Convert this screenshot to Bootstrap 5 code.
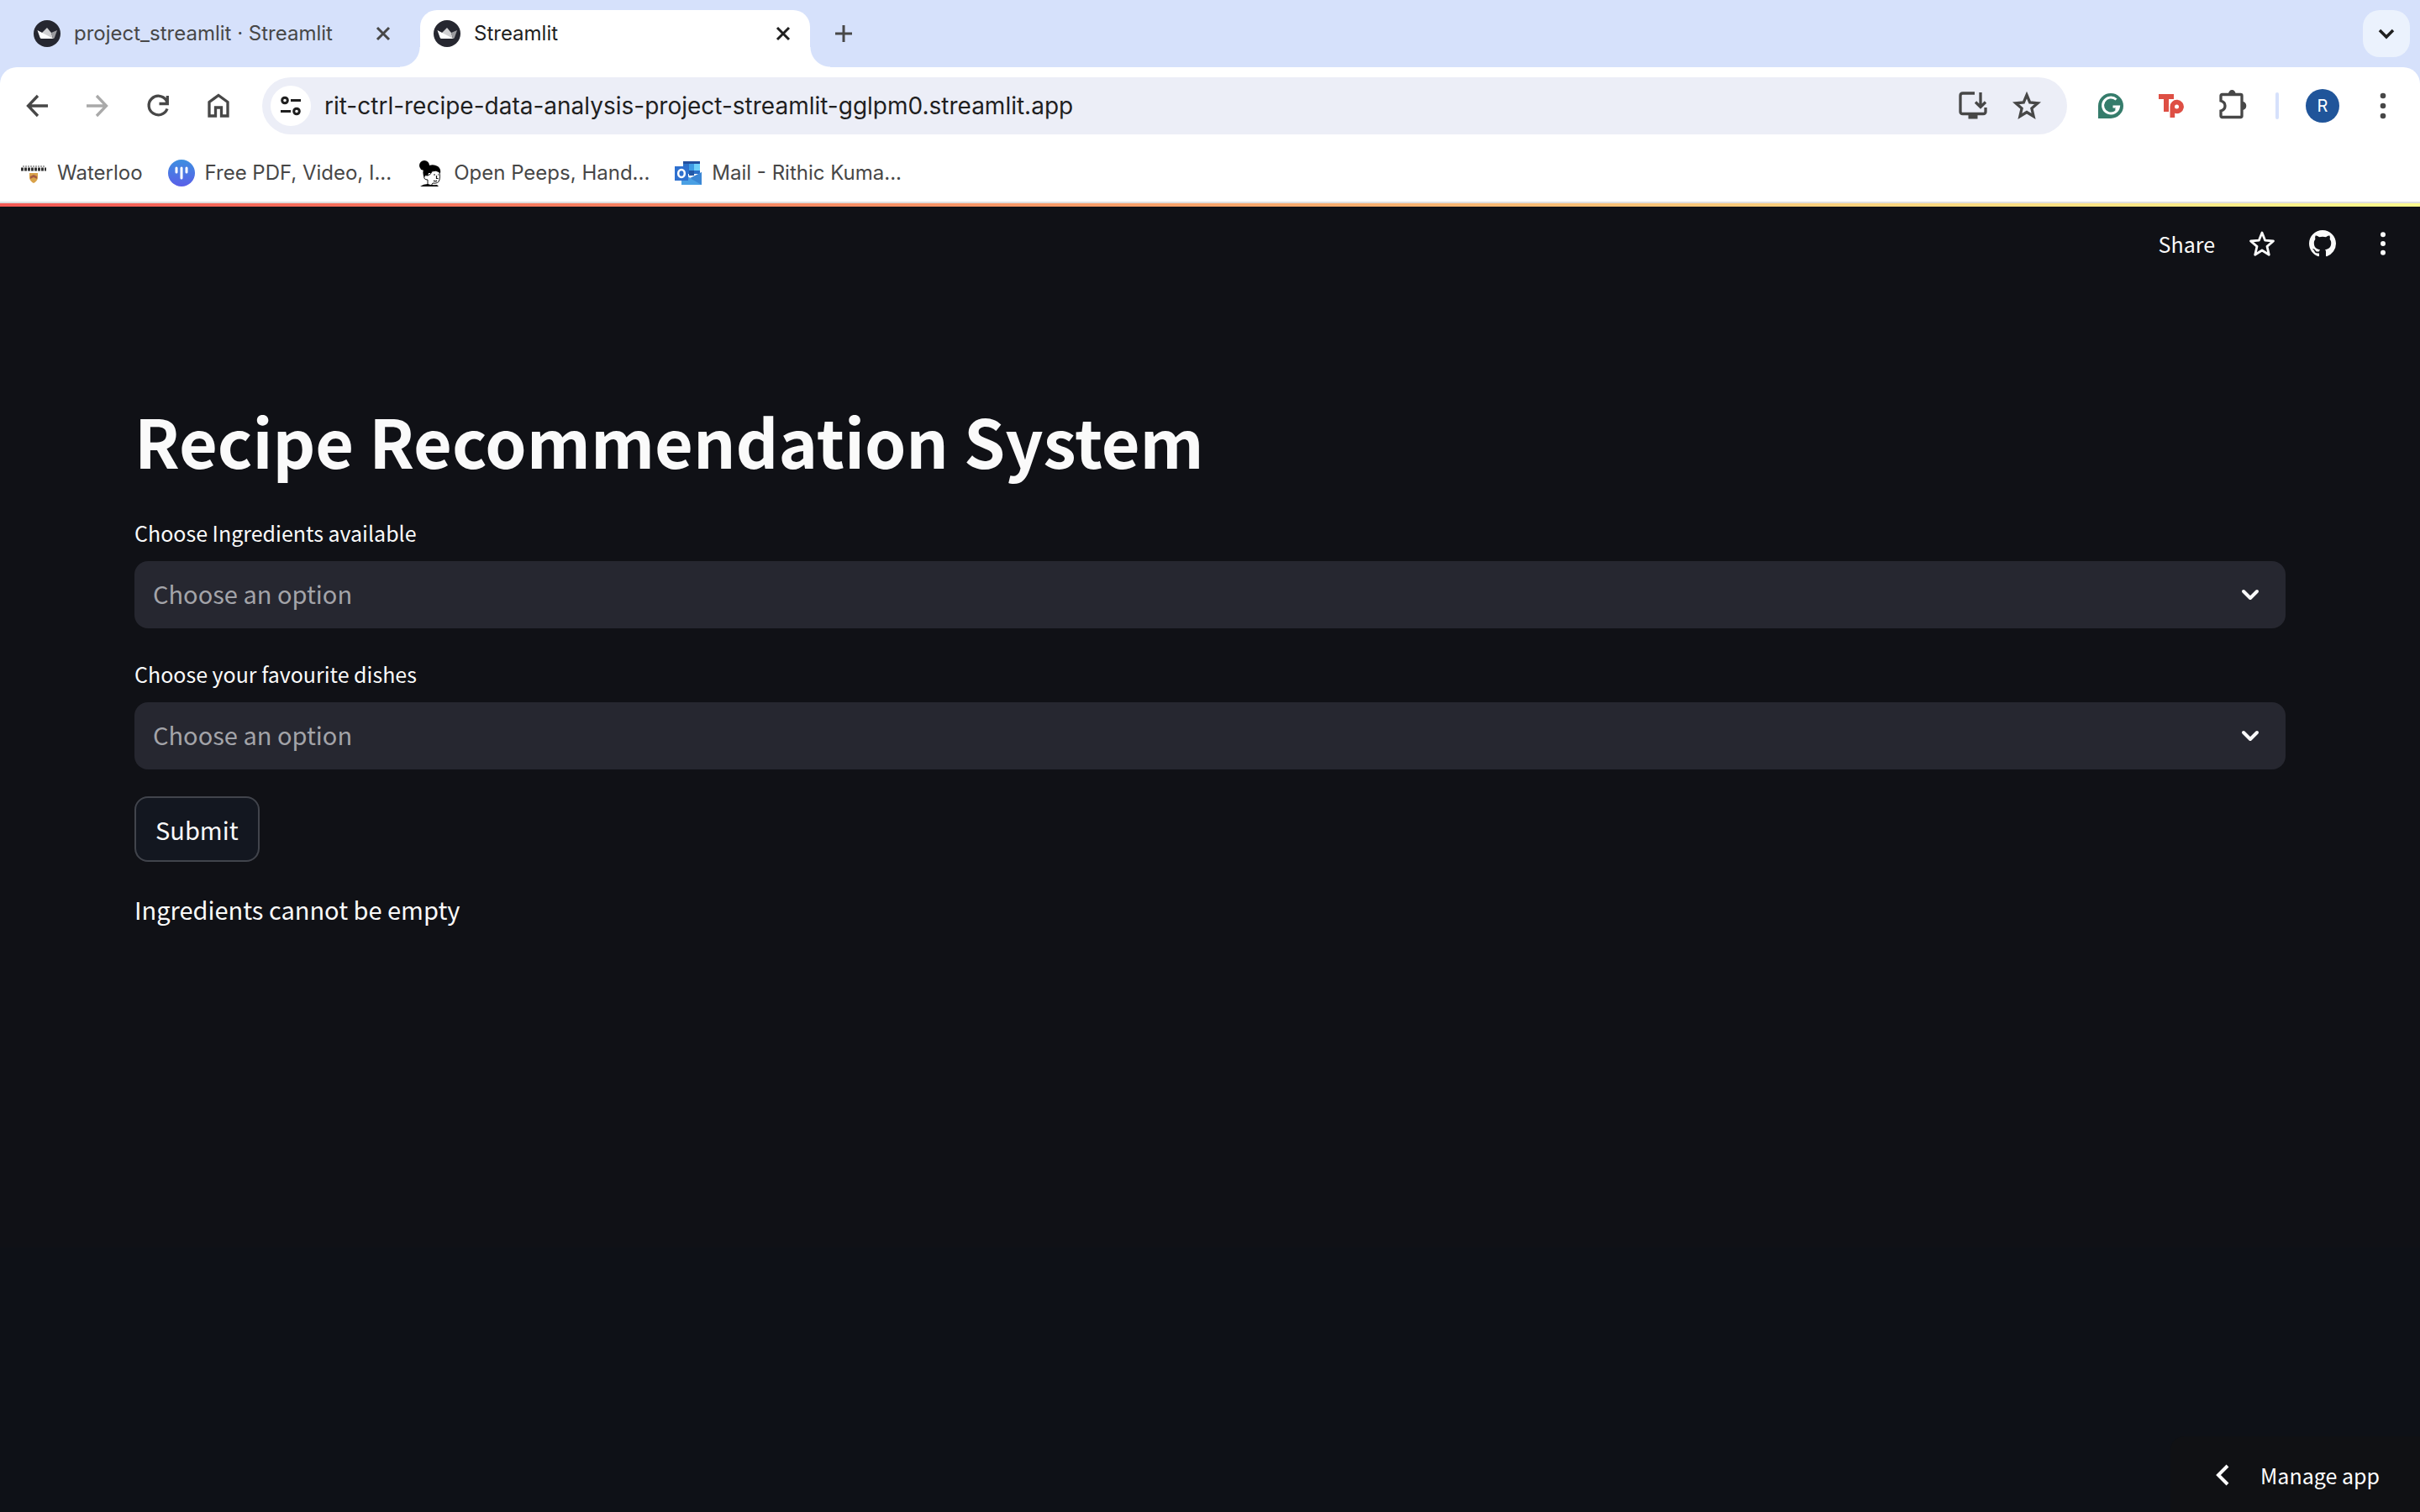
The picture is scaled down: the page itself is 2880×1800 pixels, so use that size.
<!DOCTYPE html>
<html lang="en">
<head>
<meta charset="utf-8">
<meta name="viewport" content="width=device-width, initial-scale=1">
<title>Streamlit</title>
<link href="https://cdn.jsdelivr.net/npm/bootstrap@5.3.0/dist/css/bootstrap.min.css" rel="stylesheet">
<style>
:root{--chrome-font:Inter,"Liberation Sans",sans-serif;--app-font:"Noto Sans CJK SC","Noto Sans",sans-serif}
body{background:#101116;color:#fafafa;font-family:var(--app-font);font-size:29px;line-height:48px}
svg{display:block;flex:none}
button{font:inherit}
.icon-btn{width:40px;height:40px;flex:none;background:none;border:0;padding:0;display:flex;align-items:center;justify-content:center;color:inherit}
.browser{font-family:var(--chrome-font);color:#474747;background:#d6e1fb}
.tab-strip{height:80px;padding:12px 12px 0 40px;font-size:24px;line-height:56px}
.tab-item{height:68px;padding-bottom:12px;gap:16px}
.tab-rest{width:460px;padding-right:24px}
.tab-live{width:464px;padding-left:16px;padding-right:20px;background:#fff;border-radius:20px 20px 0 0;color:#1f1f1f;position:relative}
.tab-live::before,.tab-live::after{content:"";position:absolute;bottom:0;width:24px;height:24px}
.tab-live::before{left:-24px;background:radial-gradient(circle at 0 0,transparent 23px,#fff 24px)}
.tab-live::after{right:-24px;background:radial-gradient(circle at 100% 0,transparent 23px,#fff 24px)}
.tab-close{width:24px}
.new-tab{height:56px;margin-left:20px}
.tab-search{width:56px;height:56px;border-radius:20px;background:#ebf2fd;color:#1f1f1f}
.toolbar{height:92px;background:#fff;border-radius:20px 20px 0 0;padding:0 24px;gap:32px}
.omnibox{height:68px;border-radius:34px;background:#eceef7;padding:0 28px 0 10px;gap:16px}
.omnibox-tools{gap:24px}
.site-info{width:48px;height:48px;border-radius:50%;background:#fff;color:#1f1f1f}
.address{background:none;border:0;outline:0;color:#1f1f1f;font-size:28px;padding:0;min-width:0}
.avatar{border-radius:50%;background:#20559a;color:#fff;font-size:20px}
.split-line{width:4px;height:32px;border-radius:2px;background:#d6e1fb}
.bookmarks{height:68px;background:#fff;padding:0 24px;gap:30px;font-size:24px;line-height:32px}
.bookmark{gap:12px;color:#474747;text-decoration:none}
.app-edge{border-top:2px solid #dfdfe0;height:6px;background:linear-gradient(90deg,#f55a55,#f9a46a 50%,#fcfa8d)}
.app-bar{height:88px;padding:0 24px;gap:32px;font-size:25px}
.share-btn{background:none;border:0;padding:0 4px 0 0;color:inherit}
.app-main{padding:137px 160px 48px}
.app-title{font-size:79px;line-height:106px;font-weight:700;margin:0 0 37px}
.field{margin-bottom:34px}
.field-label{display:block;font-size:25px;line-height:40px;margin-bottom:14px}
.field-box{height:80px;border:0;border-radius:16px;background:#262730;color:#a3a4a9;font-size:29px;line-height:48px;padding:0 22px 4px;appearance:none;width:100%}
.select-wrap{display:grid;align-items:center}
.select-wrap>*{grid-area:1/1}
.select-wrap svg{justify-self:end;margin-right:26px;pointer-events:none}
.submit-btn{border:2px solid #41444c;border-radius:16px;background:#131720;padding:13px 23px;margin:32px 0;color:#fafafa}
.app-foot{height:17.5vh;background:#0e1117}
.manage-btn{width:297px;height:90px;background:#101114;border:0;border-radius:16px 0 0 0;color:#fff;font-size:25px;gap:36px;padding:2px 48px 0 0}
</style>
</head>
<body class="min-vh-100 d-flex flex-column">
<svg width="0" height="0" class="position-absolute" aria-hidden="true">
<symbol id="crown" viewBox="0 0 32 32"><circle cx="16" cy="16" r="16" fill="#262730"/><path d="M10 15l6-6 5 6 2 7-13-3z" fill="#d0d0d2"/><path d="M4.500 12l19 10H9.500q-1.500 0-2-1.500z" fill="#fff"/><path d="M28 12l-7 3 2 7q1.500 0 2-1.500z" fill="#9b9b9f"/></symbol>
<symbol id="cross" viewBox="0 0 24 24"><path d="M5 5l14 14M19 5L5 19" stroke="currentColor" stroke-width="3"/></symbol>
<symbol id="dots" viewBox="0 0 40 40"><g fill="currentColor"><circle cx="20" cy="8" r="3.300"/><circle cx="20" cy="20" r="3.300"/><circle cx="20" cy="32" r="3.300"/></g></symbol>
<symbol id="chev" viewBox="0 0 40 40"><path d="M12 16l8 8 8-8" fill="none" stroke="currentColor" stroke-width="4" stroke-linecap="round" stroke-linejoin="round"/></symbol>
</svg>

<header class="browser">
  <div class="tab-strip d-flex">
    <div class="tab-item tab-rest d-flex align-items-center">
      <svg width="32" height="32"><use href="#crown"/></svg>
      <span class="flex-grow-1 text-nowrap">project_streamlit · Streamlit</span>
      <button class="icon-btn" aria-label="Close tab"><svg width="24" height="24"><use href="#cross"/></svg></button>
    </div>
    <div class="tab-item tab-live d-flex align-items-center">
      <svg width="32" height="32"><use href="#crown"/></svg>
      <span class="flex-grow-1">Streamlit</span>
      <button class="icon-btn tab-close" aria-label="Close tab"><svg width="24" height="24"><use href="#cross"/></svg></button>
    </div>
    <button class="icon-btn new-tab" aria-label="New tab"><svg width="24" height="24" viewBox="0 0 24 24"><path d="M12 2v20M2 12h20" stroke="currentColor" stroke-width="3"/></svg></button>
    <button class="icon-btn tab-search ms-auto" aria-label="Search tabs"><svg width="40" height="40" viewBox="0 0 40 40"><path d="M12 16l8 8 8-8" fill="none" stroke="currentColor" stroke-width="3.500"/></svg></button>
  </div>

  <div class="toolbar d-flex align-items-center">
    <button class="icon-btn" aria-label="Back"><svg width="40" height="40" viewBox="0 0 40 40" fill="none" stroke="currentColor" stroke-width="3.300"><path d="M33 20H10M21 8L9.500 20 21 32"/></svg></button>
    <button class="icon-btn" aria-label="Forward"><svg width="40" height="40" viewBox="0 0 40 40" fill="none" stroke="#a9a9a9" stroke-width="3.300"><path d="M7 20h23M19 8l11.500 12L19 32"/></svg></button>
    <button class="icon-btn" aria-label="Reload"><svg width="40" height="40" viewBox="0 0 40 40" fill="none" stroke="currentColor" stroke-width="3.300"><path d="M31 23.500A11.300 11.300 0 1 1 30 13.500L31 17M31.300 8v9.500H21.500"/></svg></button>
    <button class="icon-btn" aria-label="Home"><svg width="40" height="40" viewBox="0 0 40 40" fill="none" stroke="currentColor" stroke-width="3.300"><path d="M9 32V15.500L20 7.500l11 8V32h-7.500V22h-7v10z"/></svg></button>
    <div class="omnibox d-flex align-items-center flex-grow-1">
      <button class="icon-btn site-info" aria-label="Site information"><svg width="28" height="28" viewBox="0 0 28 28" fill="none" stroke="currentColor" stroke-width="3"><circle cx="7" cy="7.500" r="3.300"/><path d="M14 7.500h12M2 20.500h12"/><circle cx="21" cy="20.500" r="3.300"/></svg></button>
      <input class="address flex-grow-1" type="text" aria-label="Address" value="rit-ctrl-recipe-data-analysis-project-streamlit-gglpm0.streamlit.app">
      <div class="omnibox-tools d-flex">
        <button class="icon-btn" aria-label="Install app"><svg width="40" height="40" viewBox="0 0 40 40" fill="none" stroke="currentColor" stroke-width="3.300"><path d="M22 5H8q-3 0-3 3v19q0 2.500 3 2.500h24q3 0 3-2.500v-5M29 4v17M23 15.500l6 6 6-6"/><path d="M14.500 33h11" stroke-width="5"/></svg></button>
        <button class="icon-btn" aria-label="Bookmark"><svg width="40" height="40" viewBox="0 0 40 40" fill="none" stroke="currentColor" stroke-width="3.300"><path d="M20 7l3.700 9 9.300.8-7.100 6.200 2.200 9.500-8.100-5-8.100 5 2.200-9.500L7 16.800l9.300-.8z"/></svg></button>
      </div>
    </div>
    <button class="icon-btn" aria-label="Grammarly"><svg width="30" height="30" viewBox="0 0 30 30"><path d="M0 30V15A15 15 0 1 1 15 30z" fill="#357c6b"/><path d="M21.500 7.500A9.500 9.500 0 1 0 24.500 16H17.500M24.500 16l-3.500 4" fill="none" stroke="#fff" stroke-width="3"/></svg></button>
    <button class="icon-btn" aria-label="Toolkit"><svg width="30" height="30" viewBox="0 0 30 30"><path d="M0 1h18v6h-6v15H6V7H0z" fill="#de4f44"/><path d="M13.500 29V16.500a8.200 8.200 0 1 1 5.700 7.300V29z" fill="#de4f44"/><circle cx="21.500" cy="16" r="2.500" fill="#fff"/></svg></button>
    <button class="icon-btn" aria-label="Extensions"><svg width="40" height="40" viewBox="0 0 40 40"><path d="M9.500 6.500h21q1.500 0 1.500 1.500v24q0 1.500-1.500 1.500h-22Q7 33.500 7 32v-6q5-1.500 5-6t-5-6V8q0-1.500 1.500-1.500z" fill="none" stroke="currentColor" stroke-width="3.300"/><path d="M16 6a4.300 5 0 0 1 8.600 0zM33 15a4.300 5 0 0 1 0 10z" fill="currentColor"/></svg></button>
    <span class="split-line"></span>
    <button class="icon-btn avatar" aria-label="Profile">R</button>
    <button class="icon-btn" aria-label="Browser menu"><svg width="40" height="40"><use href="#dots"/></svg></button>
  </div>

  <nav class="bookmarks d-flex align-items-center" aria-label="Bookmarks">
    <a class="bookmark d-flex align-items-center" href="#"><svg width="32" height="32" viewBox="0 0 32 32"><path d="M3 8h26" stroke="#aaa" stroke-width="2" stroke-dasharray="2 1"/><path d="M1 11.500h30" stroke="#333" stroke-width="4" stroke-dasharray="3 1"/><path d="M11 16h10v6q-1 4-5 6-4-2-5-6z" fill="#d9a24a"/><path d="M12 20l4-2 4 2v3l-4-2-4 2z" fill="#a35a42"/></svg><span>Waterloo</span></a>
    <a class="bookmark d-flex align-items-center" href="#"><svg width="32" height="32" viewBox="0 0 32 32"><defs><linearGradient id="pdf" x2="0" y2="1"><stop stop-color="#3d8fe0"/><stop offset="1" stop-color="#5a5fe8"/></linearGradient></defs><circle cx="16" cy="16" r="16" fill="url(#pdf)"/><path d="M10 10v5M16 10v12M22 10v5" stroke="#fff" stroke-width="3" stroke-linecap="round"/></svg><span>Free PDF, Video, I...</span></a>
    <a class="bookmark d-flex align-items-center" href="#"><svg width="32" height="32" viewBox="0 0 32 32"><circle cx="9" cy="7" r="6"/><path d="M9 22Q5 13 11 9q7-5 14-1 4 3 3 8H14l-2 8z"/><path d="M13 19q4-1 5-5 5-2 9 1 1 6 0 9-1 5-8 4l-2 3-4-1v-6q-5 0-4-4 1-2 4-1z" fill="#fff" stroke="#111" stroke-width="1"/><path d="M20 18h2M25 18h1M23.500 19v3.500h2M20 25q2 1.500 4 0" fill="none" stroke="#111" stroke-width="1.200"/><path d="M4 32q4-3 9-3 5 2 11 1l2 2z"/></svg><span>Open Peeps, Hand...</span></a>
    <a class="bookmark d-flex align-items-center" href="#"><svg width="32" height="32" viewBox="0 0 32 32"><path d="M10 2h20v15H10z" fill="#2a70c8"/><path d="M10 2h20v3H10z" fill="#234f9e"/><path d="M17 5h6v8h-6z" fill="#3d9be5"/><path d="M23 5h7v8h-7z" fill="#6fd0fa"/><path d="M17 13h6v6h-6z" fill="#2259a8"/><path d="M8 15l12 8 12-8v15H8z" fill="#4aa0e4"/><path d="M32 15v15L18 22z" fill="#3a86d4"/><path d="M0 8h16v17H0z" fill="#2e70cf"/><ellipse cx="8" cy="16.500" rx="3.800" ry="4.500" fill="none" stroke="#fff" stroke-width="2.500"/></svg><span>Mail - Rithic Kuma...</span></a>
  </nav>
</header>
<div class="app-edge"></div>

<div class="app-bar d-flex align-items-center justify-content-end">
  <button class="share-btn">Share</button>
  <button class="icon-btn" aria-label="Favourite"><svg width="40" height="40" viewBox="0 0 40 40" fill="none" stroke="currentColor" stroke-width="2.800" stroke-linejoin="round"><path d="M20 7l3.700 9.200 9.800.8-7.500 6.400 2.300 9.900L20 28l-8.300 5.300 2.300-9.900L6.500 17l9.800-.8z"/></svg></button>
  <button class="icon-btn" aria-label="View source on GitHub"><svg width="32" height="32" viewBox="0 0 16 16" fill="currentColor"><path d="M8 0C3.580 0 0 3.580 0 8c0 3.540 2.290 6.530 5.470 7.590.4.070.55-.17.55-.38 0-.19-.01-.82-.01-1.490-2.010.37-2.530-.49-2.690-.94-.09-.23-.48-.94-.82-1.130-.28-.15-.68-.52-.01-.53.63-.01 1.080.58 1.230.82.72 1.210 1.870.87 2.330.66.07-.52.28-.87.51-1.070-1.780-.2-3.640-.89-3.640-3.950 0-.87.31-1.590.82-2.150-.08-.2-.36-1.020.08-2.120 0 0 .67-.21 2.200.82.64-.18 1.320-.27 2-.27s1.360.09 2 .27c1.530-1.040 2.200-.82 2.200-.82.44 1.100.16 1.920.08 2.120.51.56.82 1.270.82 2.150 0 3.070-1.870 3.750-3.650 3.950.29.25.54.73.54 1.480 0 1.070-.01 1.930-.01 2.200 0 .21.15.46.55.38A8.010 8.010 0 0 0 16 8c0-4.420-3.580-8-8-8z"/></svg></button>
  <button class="icon-btn" aria-label="App menu"><svg width="36" height="36"><use href="#dots"/></svg></button>
</div>

<main class="app-main flex-grow-1">
  <h1 class="app-title">Recipe Recommendation System</h1>
  <form>
    <div class="field">
      <label class="field-label" for="ingredients">Choose Ingredients available</label>
      <div class="select-wrap">
        <select class="field-box" id="ingredients"><option>Choose an option</option></select>
        <svg width="32" height="32" viewBox="4 4 32 32"><use href="#chev" width="40" height="40"/></svg>
      </div>
    </div>
    <div class="field mb-0">
      <label class="field-label" for="dishes">Choose your favourite dishes</label>
      <div class="select-wrap">
        <select class="field-box" id="dishes"><option>Choose an option</option></select>
        <svg width="32" height="32" viewBox="4 4 32 32"><use href="#chev" width="40" height="40"/></svg>
      </div>
    </div>
    <button class="submit-btn d-block" type="button">Submit</button>
  </form>
  <p class="m-0">Ingredients cannot be empty</p>
</main>

<footer class="app-foot d-flex align-items-end justify-content-end">
  <button class="manage-btn d-flex align-items-center justify-content-end"><svg width="18" height="26" viewBox="0 0 18 26"><path d="M15 2L4 13l11 11" fill="none" stroke="currentColor" stroke-width="4"/></svg><span>Manage app</span></button>
</footer>
<script src="https://cdn.jsdelivr.net/npm/bootstrap@5.3.0/dist/js/bootstrap.bundle.min.js"></script>
</body>
</html>
